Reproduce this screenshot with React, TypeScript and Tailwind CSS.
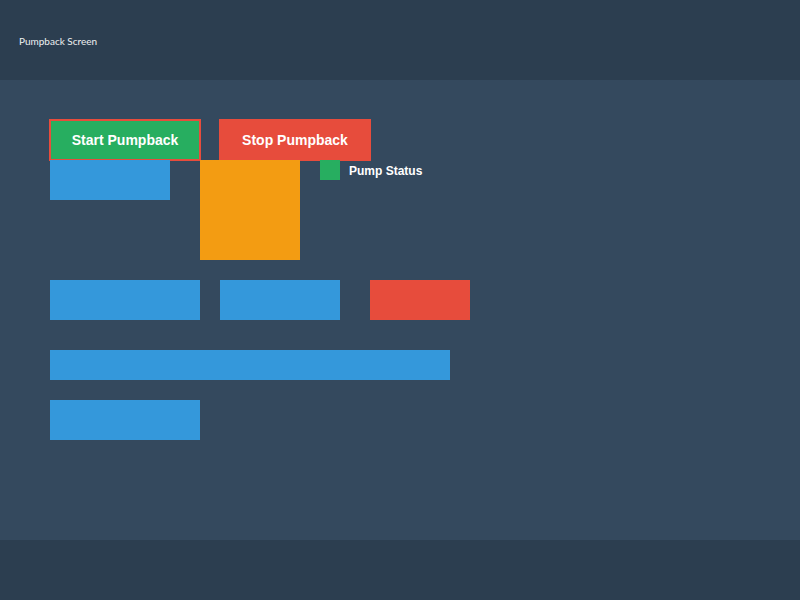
import { FC } from 'react';

interface Widget {
  left: number;
  top: number;
  width: number;
  height: number;
  color: string;
}

// blocks placed on the screen canvas (coordinates relative to the canvas)
const blocks: Widget[] = [
  { left: 50, top: 80, width: 120, height: 40, color: 'bg-[#3498db]' },
  { left: 200, top: 80, width: 100, height: 100, color: 'bg-[#f39c12]' },
  { left: 50, top: 200, width: 150, height: 40, color: 'bg-[#3498db]' },
  { left: 220, top: 200, width: 120, height: 40, color: 'bg-[#3498db]' },
  { left: 370, top: 200, width: 100, height: 40, color: 'bg-[#e74c3c]' },
  { left: 50, top: 270, width: 400, height: 30, color: 'bg-[#3498db]' },
  { left: 50, top: 320, width: 150, height: 40, color: 'bg-[#3498db]' },
];

const App: FC = () => {
  return (
    <div className="w-[800px] h-[600px] flex flex-col bg-[#34495e] font-['Liberation_Sans',Arial,sans-serif]">
      <header className="h-[80px] flex items-center px-[19px] pt-[2px] bg-[#2c3e50]">
        <h1 className="text-[10px] text-[#ecf0f1] font-['Lato',sans-serif] font-normal">Pumpback Screen</h1>
      </header>

      <main className="relative flex-1">
        <button className="absolute left-[49px] top-[39px] w-[152px] h-[42px] pt-[1px] border-2 border-[#e74c3c] bg-[#27ae60] text-white font-bold text-[14px]">
          Start Pumpback
        </button>
        <button className="absolute left-[219px] top-[39px] w-[152px] h-[42px] pt-[1px] border-2 border-[#e74c3c] bg-[#e74c3c] text-white font-bold text-[14px]">
          Stop Pumpback
        </button>

        {blocks.map((b, i) => (
          <div
            key={i}
            className={`absolute ${b.color}`}
            style={{ left: b.left, top: b.top, width: b.width, height: b.height }}
          />
        ))}

        <div className="absolute left-[320px] top-[80px] flex items-center gap-[9px]">
          <div className="w-[20px] h-[20px] bg-[#27ae60]" />
          <span className="pt-[2px] text-white font-bold text-[12px]">Pump Status</span>
        </div>
      </main>

      <footer className="h-[60px] bg-[#2c3e50]" />
    </div>
  );
};

export default App;
